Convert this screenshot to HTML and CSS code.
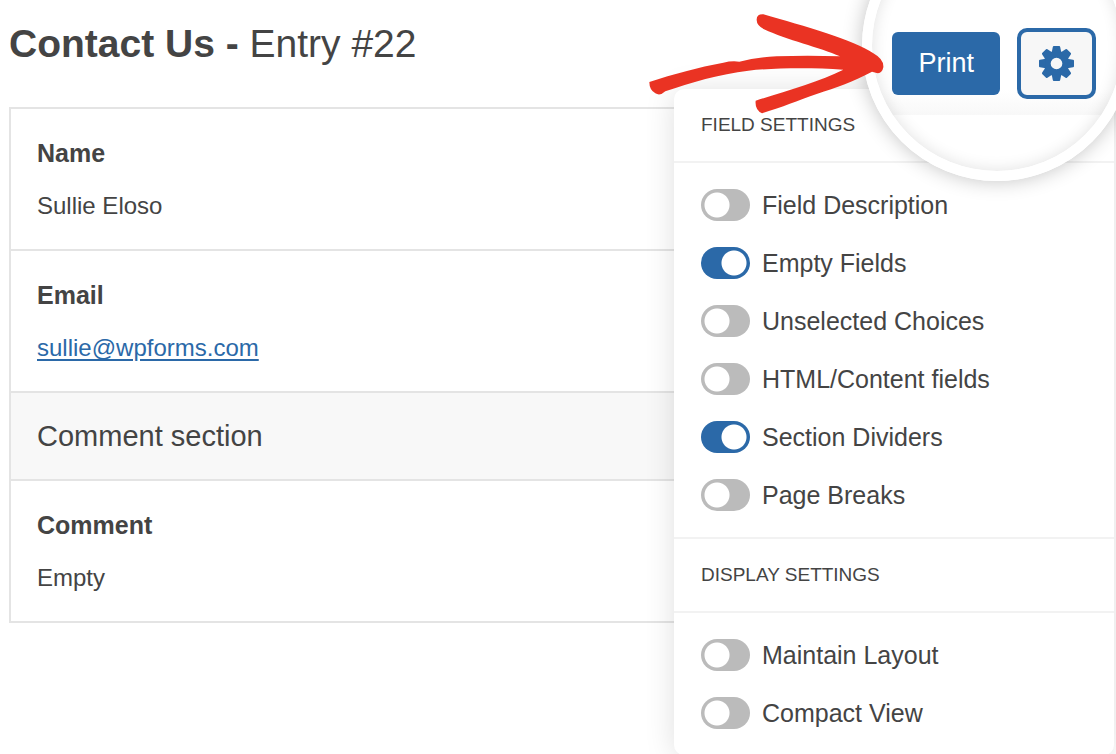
FILE: index.html
```html
<!DOCTYPE html>
<html lang="en">
<head>
<meta charset="utf-8">
<meta name="viewport" content="width=device-width, initial-scale=1">
<title>Contact Us - Entry #22</title>
<link rel="stylesheet" href="styles.css">
</head>
<body>
<div class="page">
  <header class="header">
    <h1 class="title">Contact Us - <span class="title-entry">Entry #22</span></h1>
    <div class="actions">
      <button class="print" type="button">Print</button>
      <button class="gear" type="button" aria-label="Settings">
        <svg class="gear-icon" viewBox="-18 -18 36 36" aria-hidden="true">
          <circle r="9.5" fill="none" stroke="currentColor" stroke-width="7"/>
          <g fill="currentColor">
            <path id="tooth" d="M-5-11L-3.8-17Q-3.6-18-2.8-18H2.8Q3.6-18 3.8-17L5-11Z"/>
            <use href="#tooth" transform="rotate(45)"/>
            <use href="#tooth" transform="rotate(90)"/>
            <use href="#tooth" transform="rotate(135)"/>
            <use href="#tooth" transform="rotate(180)"/>
            <use href="#tooth" transform="rotate(225)"/>
            <use href="#tooth" transform="rotate(270)"/>
            <use href="#tooth" transform="rotate(315)"/>
          </g>
        </svg>
      </button>
    </div>
  </header>

  <main class="entry">
    <section class="field">
      <h2 class="field-name">Name</h2>
      <p class="field-value">Sullie Eloso</p>
    </section>
    <section class="field">
      <h2 class="field-name">Email</h2>
      <p class="field-value"><a class="link" href="mailto:sullie@wpforms.com">sullie@wpforms.com</a></p>
    </section>
    <h2 class="divider">Comment section</h2>
    <section class="field">
      <h2 class="field-name">Comment</h2>
      <p class="field-value">Empty</p>
    </section>
  </main>

  <aside class="panel">
    <h2 class="panel-title">FIELD SETTINGS</h2>
    <div class="options">
      <label class="option"><input class="toggle" type="checkbox">Field Description</label>
      <label class="option"><input class="toggle" type="checkbox" checked>Empty Fields</label>
      <label class="option"><input class="toggle" type="checkbox">Unselected Choices</label>
      <label class="option"><input class="toggle" type="checkbox">HTML/Content fields</label>
      <label class="option"><input class="toggle" type="checkbox" checked>Section Dividers</label>
      <label class="option"><input class="toggle" type="checkbox">Page Breaks</label>
    </div>
    <h2 class="panel-title">DISPLAY SETTINGS</h2>
    <div class="options">
      <label class="option"><input class="toggle" type="checkbox">Maintain Layout</label>
      <label class="option"><input class="toggle" type="checkbox">Compact View</label>
    </div>
  </aside>

  <div class="lens"></div>
  <svg class="arrow" viewBox="0 0 750 360" aria-hidden="true"><path d="M28 246C100 222 175 202 250 188Q275 182 298 185Q350 172 410 169Q500 166 600 169C540 143 440 120 372 88Q350 76 350 60Q349 42 370 43C430 60 500 80 560 100C620 120 670 140 700 160Q732 178 730 202Q726 222 710 219L696 215C640 245 590 262 530 282C470 303 430 320 366 340Q344 330 347 302C430 275 540 245 610 209C510 202 400 204 325 212C240 222 150 248 76 274Q60 289 46 280Q28 270 28 246Z"/></svg>
</div>
</body>
</html>
```
FILE: styles.css
```css
* { box-sizing: border-box; }

body {
  margin: 0;
  background: #fff;
  color: #444;
  font-family: "Liberation Sans", Arial, sans-serif;
  font-size: 24px;
}

h1, h2, p { margin: 0; }

.page {
  position: relative;
  min-height: 100vh;
  overflow: hidden;
}

.header {
  display: flex;
  justify-content: space-between;
  align-items: flex-start;
  padding: 28px 20px 8px 9px;
}

.title {
  font-size: 39px;
  line-height: 32px;
}

.title-entry { font-weight: 400; }

.actions {
  position: relative;
  z-index: 3;
  display: flex;
  align-items: center;
  gap: 17px;
}

.print {
  padding: 16px 26px;
  border: 0;
  border-radius: 6px;
  background: #2b69a8;
  color: #fff;
  font: 27px/31px "Liberation Sans", Arial, sans-serif;
}

.gear {
  display: flex;
  padding: 14px 18px;
  border: 4px solid #2b69a8;
  border-radius: 10px;
  background: #f7f7f7;
  color: #2b69a8;
}

.gear-icon {
  width: 35px;
  height: 35px;
}

.entry {
  margin: 0 20px 0 9px;
  border: 2px solid #e4e4e4;
}

.field {
  display: grid;
  gap: 23px;
  padding: 29px 26px 28px;
  line-height: 30px;
}

.field + .field { border-top: 2px solid #e4e4e4; }

.field-name { font-size: 25px; }

.link {
  color: #2b69a8;
  text-underline-offset: 3px;
}

.divider {
  padding: 27px 26px;
  border: solid #e4e4e4;
  border-width: 2px 0;
  background: #f8f8f8;
  font-size: 29px;
  font-weight: 400;
  line-height: 32px;
}

.panel {
  position: absolute;
  z-index: 1;
  top: 89px;
  right: 2px;
  width: 440px;
  border-radius: 10px;
  background: #fff;
  box-shadow: 0 2px 30px rgba(0, 0, 0, 0.13);
}

.panel-title {
  padding: 24px 27px;
  border-bottom: 2px solid #f2f2f2;
  font-size: 19px;
  font-weight: 400;
  line-height: 24px;
}

.options + .panel-title { border-top: 2px solid #f2f2f2; }

.options {
  display: grid;
  gap: 26px;
  padding: 26px 27px;
}

.option {
  display: flex;
  align-items: center;
  gap: 12px;
  font-size: 25px;
  line-height: 32px;
}

.toggle {
  appearance: none;
  width: 49px;
  height: 32px;
  margin: 0;
  border-radius: 16px;
  background: radial-gradient(circle at 16px 50%, #fff 12px, #bbb 13px);
}

.toggle:checked {
  background: radial-gradient(circle at 33px 50%, #fff 12px, #2b69a8 13px);
}

.lens {
  position: absolute;
  z-index: 2;
  top: -89px;
  right: -16px;
  width: 270px;
  height: 270px;
  border: 10px solid #fff;
  border-radius: 50%;
  background: linear-gradient(#fff 169px, #f8f8f8 194px, #fff 194px);
  box-shadow: 0 0 20px rgba(0, 0, 0, 0.24), inset 0 0 16px rgba(0, 0, 0, 0.12);
}

.arrow {
  position: absolute;
  z-index: 4;
  top: 0;
  right: 226px;
  width: 250px;
  height: 120px;
  fill: #ea3323;
}
```
